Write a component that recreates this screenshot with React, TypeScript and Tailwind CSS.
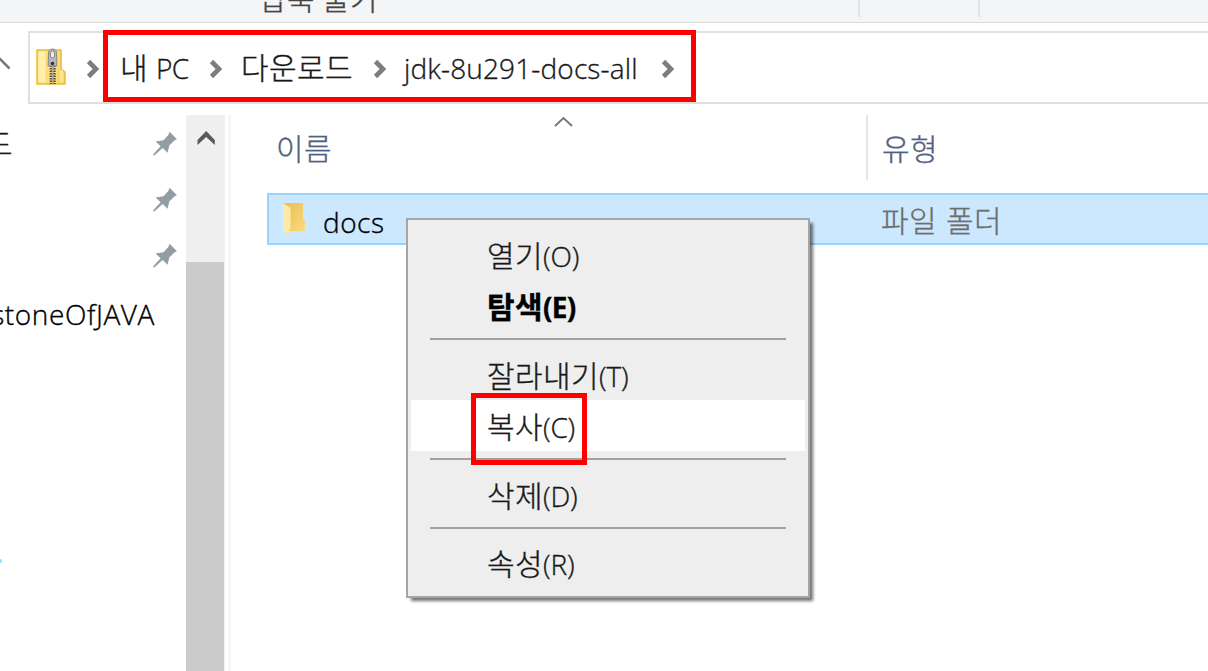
import React from "react";

const latin = "font-['Open_Sans','Noto_Sans_CJK_KR',sans-serif]";
const hangul = "font-['Noto_Sans_CJK_KR',sans-serif] tracking-[0.4px]";

function Crumb() {
  return (
    <svg width="14" height="20" viewBox="0 0 14 20" className="mt-[3px] -ml-px shrink-0">
      <path d="M2.500 2.500 10 10l-7.500 7.500" fill="none" stroke="#7d7d7d" strokeWidth="4.600" />
    </svg>
  );
}

function Pin() {
  return (
    <svg width="26" height="26" viewBox="0 0 26 26" className="shrink-0">
      <path
        d="M17.600.8 25 8.200 22.600 9.300 17.300 14.500 15.600 21.800 10.600 17.100 2 24.700 1 23.600 8.600 15.300 3.600 10.600 11.500 9.200 16.500 3.700Z"
        fill="#929ea6"
      />
    </svg>
  );
}

function ZipFolder() {
  return (
    <svg width="30" height="38" viewBox="0 0 30 38" className="shrink-0">
      <path d="M1 2h24v19l4 3v12H1Z" fill="#fbdc76" stroke="#e8bd3e" strokeWidth="1.500" />
      <path d="M2.500 3.500h7v31h-7Z" fill="#fff0ae" />
      <path d="M25 4v17l-2 2v12h5V24l-3-3" fill="#ffe68d" stroke="#edc246" strokeWidth=".8" />
      <path d="M16.700 15v21" stroke="#4d4d4d" strokeWidth="6" strokeDasharray="1.500 1" />
      <path d="M16.700 16v20" stroke="#b5ad91" strokeWidth="1.500" />
      <path d="M12.500 5c0-2.500 1.500-4 4-4s4 1.500 4 4l.3 13h-8.600Z" fill="#b8b8b8" stroke="#888" />
      <rect x="14.500" y="3" width="4" height="7" rx="2" fill="#eee" stroke="#888" />
      <circle cx="16.500" cy="15.500" r="1.800" fill="#333" />
    </svg>
  );
}

function Folder() {
  return (
    <svg width="24" height="34" viewBox="0 0 24 34" className="shrink-0">
      <defs>
        <linearGradient id="back" x1="0" x2="1" y2="1">
          <stop stopColor="#e9bd51" />
          <stop offset="1" stopColor="#fbdb7e" />
        </linearGradient>
      </defs>
      <path d="M2 1h19v16l2 2v10H7Z" fill="url(#back)" />
      <path d="M1 1 8.500 6v21L7 28v5l-6-4Z" fill="#ffe9a6" />
    </svg>
  );
}

function Item({ name, hotkey, bold, active }: { name: string; hotkey: string; bold?: boolean; active?: boolean }) {
  return (
    <div className={`flex h-[51.500px] shrink-0 items-center pl-[76px] leading-none ${active ? "bg-white" : ""} ${bold ? "font-bold text-black" : "font-light text-[#181818] [-webkit-text-stroke:0.35px]"}`}>
      <span className={`text-[30px] ${hangul}`}>{name}</span>
      <span className={`pt-1 text-[28px] ${bold ? "tracking-[-0.7px]" : "tracking-[-0.2px]"} ${latin}`}>({hotkey})</span>
    </div>
  );
}

function Separator() {
  return (
    <div className="h-[17px] shrink-0 pt-[7px]">
      <div className="ml-[19px] h-[2px] w-[356px] bg-[#a0a0a0]" />
    </div>
  );
}

export default function App() {
  return (
    <div className="relative flex h-[671px] w-[1208px] flex-col overflow-hidden bg-white text-[#181818] [-webkit-text-stroke:0.35px]">
      <header className="flex h-[23px] shrink-0 items-start border-b border-[#d9dadb] bg-[#f4f5f7]">
        <div className={`-mt-[18px] ml-[259px] w-[599px] text-[30px] leading-[30px] font-light whitespace-nowrap text-[#444] ${hangul}`}>
          압축 풀기
        </div>
        <div className="h-[17px] w-[122px] border-x-2 border-[#e3e4e6]" />
      </header>

      <nav className="flex h-[81px] shrink-0 pt-2">
        <div className="flex w-7 items-center">
          <svg width="12" height="20" viewBox="0 0 12 20" className="mb-2">
            <path d="m-1 4 10.500 10.500" stroke="#777" strokeWidth="2.500" />
          </svg>
        </div>
        <div className="flex flex-1 items-center border-y-2 border-l-2 border-[#dfdfdf] pl-[7px] leading-none font-light">
          <div className="-mt-px -ml-px"><ZipFolder /></div>
          <div className="w-[54px] pl-[21px]"><Crumb /></div>
          <div className="-mt-[3px] flex w-[90px] items-center">
            <span className={`text-[30px] ${hangul}`}>내</span>
            <span className={`pt-1 pl-[8px] text-[28px] tracking-[-0.7px] ${latin}`}>PC</span>
          </div>
          <Crumb />
          <div className={`-mt-[3px] ml-[18px] w-[133px] text-[30px] whitespace-nowrap ${hangul}`}>다운로드</div>
          <Crumb />
          <div className={`-mt-[3px] ml-[17px] w-[258px] pt-1 text-[28px] tracking-[0.15px] whitespace-nowrap ${latin}`}>jdk-8u291-docs-all</div>
          <Crumb />
        </div>
      </nav>

      <main className="flex min-h-0 flex-1">
        <aside className="flex w-[186px] flex-col pt-3">
          <div className="flex h-14 items-center justify-between pr-[8px]">
            <span className={`-mt-1 -ml-[15px] text-[30px] leading-none font-light ${hangul}`}>드</span>
            <Pin />
          </div>
          <div className="flex h-14 items-center justify-end pr-[8px]"><Pin /></div>
          <div className="flex h-14 items-center justify-end pr-[8px]"><Pin /></div>
          <div className={`flex h-14 items-center justify-end pt-1 pr-[31px] text-[28px] leading-none font-light tracking-[0.6px] whitespace-nowrap text-black ${latin}`}>
            stoneOfJAVA
          </div>
          <div className="mt-[219px] h-1 w-[2px] rounded-r bg-[#8bdcfa]" />
        </aside>
        <div className="mt-[11px] flex w-[39px] flex-col bg-[#efefef]">
          <div className="flex h-[147px] justify-center pt-[14px]">
            <svg width="20" height="20" viewBox="0 0 20 20">
              <path d="M1.500 11 10.200 2l8.600 9v5L10.200 8 1.500 16Z" fill="#5a5a5a" />
            </svg>
          </div>
          <div className="w-[38px] flex-1 bg-[#cbcbcb]" />
        </div>
        <div className="mt-[11px] ml-[3px] w-[3px] bg-[#f7f7f7]" />
        <section className="flex flex-1 flex-col pt-[11px]">
          <div className={`flex h-[65px] text-[30px] leading-none font-light text-[#4f6180] ${hangul}`}>
            <div className="w-[276px] pt-[17px] pl-[45px]">이름</div>
            <div className="w-[359px] pl-[46px]">
              <svg width="20" height="14" viewBox="0 0 20 14">
                <path d="m2 11 8.500-8 8.500 8" fill="none" stroke="#777" strokeWidth="2" />
              </svg>
            </div>
            <div className="flex-1 border-l-2 border-[#e5e5e5] pt-[17px] pl-[14px]">유형</div>
          </div>
          <div className="mt-[13px] ml-9 flex h-[52px] items-center border-2 border-r-0 border-[#99d1ff] bg-[#cce8ff] leading-none font-light">
            <div className="w-[54px] pl-[13px]"><Folder /></div>
            <div className={`w-[558px] pt-[6px] text-[28px] tracking-[0.5px] text-black ${latin}`}>docs</div>
            <div className={`text-[30px] whitespace-nowrap text-[#6d6d6d] ${hangul} [word-spacing:2px]`}>파일 폴더</div>
          </div>
        </section>
      </main>

      <div className="absolute top-[218px] left-[406px] flex h-[380px] w-[404px] flex-col border-2 border-[#a5a5a5] bg-[#eeeeee] px-[3px] pt-[8px] shadow-[4px_4px_3px_-1px_rgba(0,0,0,0.55)]">
        <Item name="열기" hotkey="O" />
        <Item name="탐색" hotkey="E" bold />
        <Separator />
        <Item name="잘라내기" hotkey="T" />
        <Item name="복사" hotkey="C" active />
        <Separator />
        <Item name="삭제" hotkey="D" />
        <Separator />
        <Item name="속성" hotkey="R" />
      </div>

      <div className="absolute top-[30px] left-[103px] h-[72px] w-[593px] border-[5px] border-[#ff0000]" />
      <div className="absolute top-[393px] left-[471px] h-[72px] w-[116px] border-[5px] border-[#ff0000]" />
    </div>
  );
}
